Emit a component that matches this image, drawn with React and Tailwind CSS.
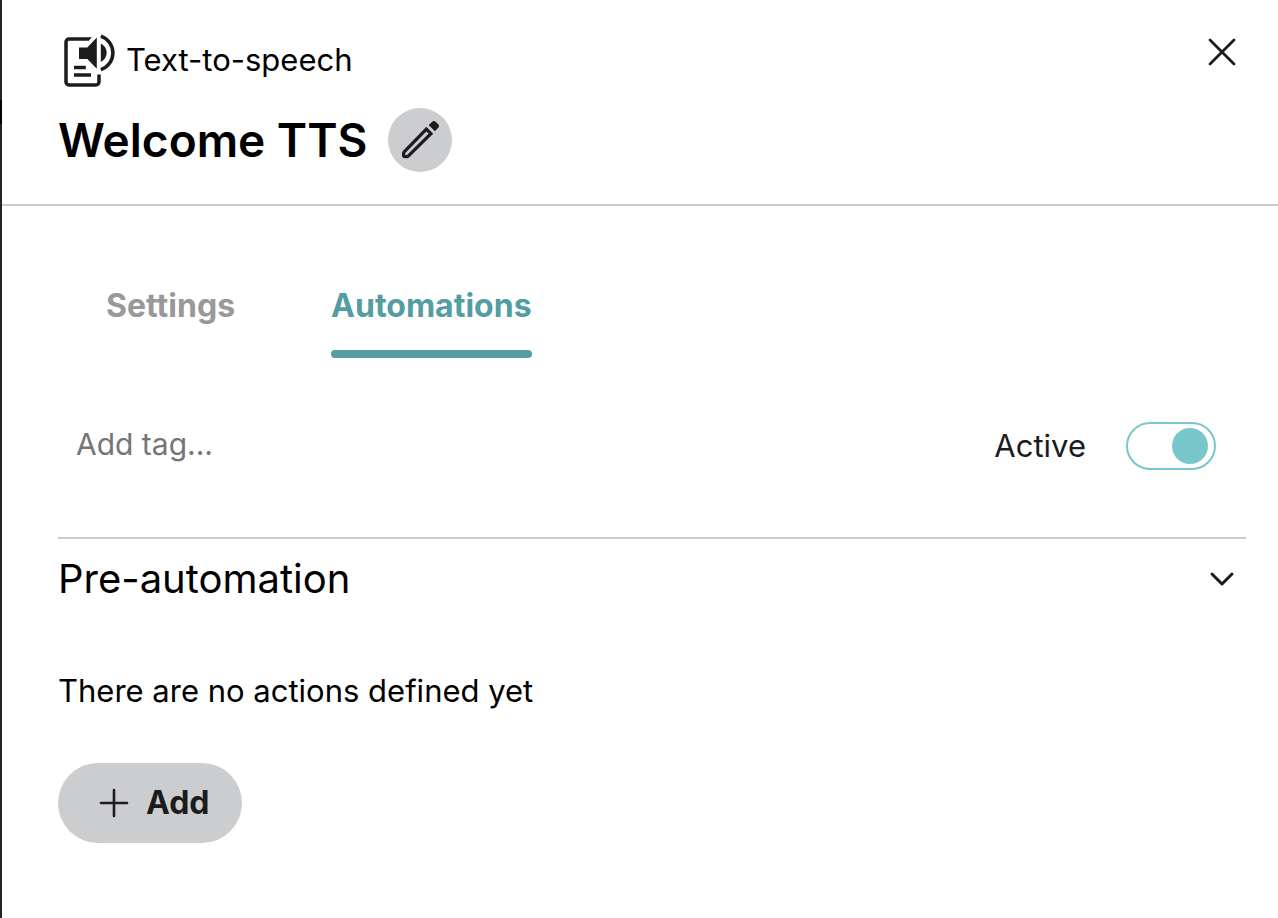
import React, { useState } from 'react';

const TABS = ['Settings', 'Automations'];

function SpeechIcon() {
  return (
    <svg viewBox="0 0 64 56" className="h-14 w-16 shrink-0" fill="none" stroke="#1c1b1d" strokeWidth="3.5" aria-hidden="true">
      <path d="M30.5 7H11a3 3 0 0 0-3 3v40a3 3 0 0 0 3 3h27a3 3 0 0 0 3-3v-7.5" />
      <path d="M30 5.25h4l-3.5 3.5H30z" fill="#1c1b1d" stroke="none" />
      <path d="M16 35.5h11.8M16 43h17" />
      <path d="M21 15.4h8.3L38.8 5.4v31.4L29.3 27H21z" fill="#1c1b1d" stroke="none" />
      <path d="M42.8 11.8c3.4 1.4 5.8 4.8 5.8 9s-2.4 7.6-5.8 9z" fill="#1c1b1d" stroke="none" />
      <path d="M42.8 4.2c7.1 2.4 12.1 9 12.1 16.7s-5 14.4-12.1 16.8" />
    </svg>
  );
}

function PencilIcon() {
  return (
    <svg viewBox="0 0 64 64" className="size-16" fill="none" stroke="#1c1b1d" strokeWidth="3.3" strokeLinejoin="miter" aria-hidden="true">
      <path d="M38.4 21.2l4.5 4.5-22.5 22.2q-.8.8-1.8.8h-1.4a1.6 1.6 0 0 1-1.6-1.6v-1.6q0-1 .8-1.8z" />
      <path d="M40.7 17l3.2-3.1a2.8 2.8 0 0 1 4 0l2.1 2.2a2.8 2.8 0 0 1 0 4l-3.1 3.1z" fill="#1c1b1d" stroke="none" />
    </svg>
  );
}

export default function App() {
  const [tab, setTab] = useState('Automations');
  const [active, setActive] = useState(true);
  const [tag, setTag] = useState('');
  const [open, setOpen] = useState(true);

  return (
    <div className="relative min-h-screen border-l-2 border-[#232225] bg-white font-['Inter',sans-serif] text-black">
      {/* Marker on the panel edge */}
      <span className="absolute -left-0.5 top-25 h-6 w-0.5 bg-black" />

      <header className="flex items-start justify-between border-b-2 border-[#cccccc] pt-7 pr-8 pb-8 pl-14">
        <div className="pt-1">
          <div className="flex items-center gap-1">
            <SpeechIcon />
            <span className="text-[31px] leading-10">Text-to-speech</span>
          </div>
          <div className="mt-5 flex items-center gap-5">
            <h1 className="text-[46px] leading-16 font-semibold">Welcome TTS</h1>
            <button type="button" aria-label="Edit name" className="size-16 rounded-full bg-[#cccdcf]">
              <PencilIcon />
            </button>
          </div>
        </div>
        <button type="button" aria-label="Close" className="size-12">
          <svg viewBox="0 0 48 48" className="size-12" fill="none" stroke="#1c1b1d" strokeWidth="2.8" strokeLinecap="round" aria-hidden="true">
            <path d="M12 12l24 24M36 12L12 36" />
          </svg>
        </button>
      </header>

      <main className="pr-8 pb-16 pl-14">
        <div role="tablist" className="flex gap-24 pt-20 pl-12">
          {TABS.map((t) => (
            <button
              key={t}
              type="button"
              role="tab"
              aria-selected={tab === t}
              onClick={() => setTab(t)}
              className={`text-[32px] leading-10 font-bold ${tab === t ? 'text-[#539da3]' : 'text-[#999999]'}`}
            >
              {t}
              <span className={`mt-6 block h-2 rounded-full ${tab === t ? 'bg-[#539da3]' : 'bg-transparent'}`} />
            </button>
          ))}
        </div>

        {/* Tag and active state */}
        <div className="flex items-center justify-between border-b-2 border-[#cccccc] pt-16 pr-[30px] pb-[67px] pl-[18px]">
          <input
            type="text"
            aria-label="Add tag"
            placeholder="Add tag..."
            value={tag}
            onChange={(e) => setTag(e.target.value)}
            className="h-11 min-w-0 flex-1 self-start text-[30px] outline-none placeholder:text-[#757575]"
          />
          <label className="flex items-center gap-10 text-[31px] leading-10 text-[#1c1b1d]">
            Active
            <input
              type="checkbox"
              role="switch"
              checked={active}
              onChange={(e) => setActive(e.target.checked)}
              className="flex h-12 w-[90px] appearance-none items-center rounded-full border-2 border-[#78c7cb] px-1.5 before:size-9 before:rounded-full before:bg-[#78c7cb] checked:justify-end"
            />
          </label>
        </div>

        {/* Pre-automation */}
        <section>
          <h2>
            <button
              type="button"
              aria-expanded={open}
              onClick={() => setOpen(!open)}
              className="flex h-20 w-full items-center justify-between text-[40px] leading-12"
            >
              Pre-automation
              <svg viewBox="0 0 48 48" className="size-12" fill="none" stroke="#1c1b1d" strokeWidth="3" strokeLinecap="round" strokeLinejoin="round" aria-hidden="true">
                <path d="M14 19l10 10 10-10" />
              </svg>
            </button>
          </h2>
          {open && (
            <div className="pt-13">
              <p className="text-[31px] leading-10">There are no actions defined yet</p>
              <button type="button" className="mt-13 flex h-20 items-center gap-4 rounded-full bg-[#cccdcf] pr-8 pl-10 text-[32px] font-bold text-[#1c1b1d]">
                <svg viewBox="0 0 32 32" className="size-8" fill="none" stroke="#1c1b1d" strokeWidth="2.6" strokeLinecap="round" aria-hidden="true">
                  <path d="M16 3v26M3 16h26" />
                </svg>
                Add
              </button>
            </div>
          )}
        </section>
      </main>
    </div>
  );
}
